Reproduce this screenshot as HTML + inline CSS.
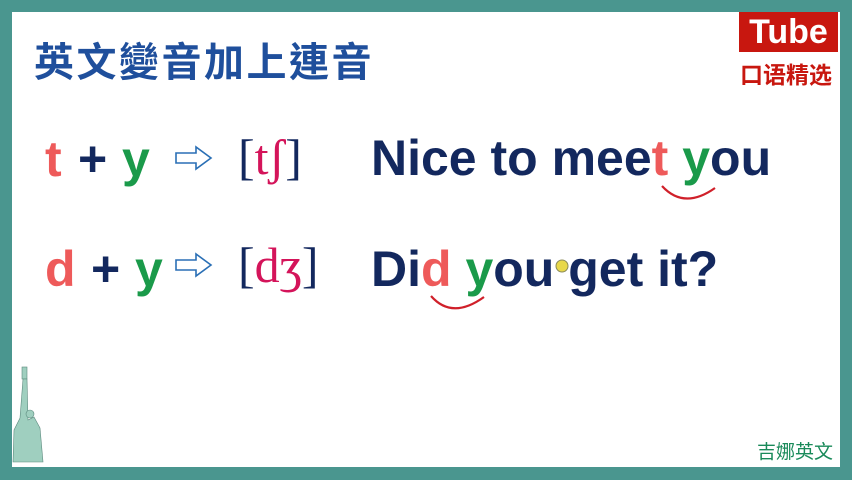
<!DOCTYPE html>
<html><head><meta charset="utf-8"><style>
html,body{margin:0;padding:0}
body{width:852px;height:480px;background:#4a968f;position:relative;overflow:hidden;font-family:"Liberation Sans","Noto Sans CJK TC",sans-serif}
#panel{position:absolute;left:12px;top:12px;width:828px;height:455px;background:#fff}
.a{position:absolute;white-space:nowrap}
.title{left:34px;top:30px;font-size:40px;font-weight:bold;color:#1f4f9c;font-family:"Liberation Sans","Noto Sans CJK TC",sans-serif;letter-spacing:2.5px}
.tube{left:739px;top:12px;width:99px;height:40px;background:#c8170f;color:#fff;font-weight:bold;font-size:34px;line-height:40px;text-align:center}
.kou{left:740px;top:56px;font-size:23px;font-weight:bold;color:#c8170f;font-family:"Liberation Sans","Noto Sans CJK SC",sans-serif;letter-spacing:0px}
.big{font-size:50px;color:#13285e;line-height:1;font-weight:bold}
.r{color:#ee5a5a}.g{color:#1a9a4a}.p{color:#d4145a}
.ipa{font-family:"Liberation Serif","DejaVu Serif",serif;font-size:50px;color:#13285e}
.name{left:757px;top:437px;font-size:19px;color:#1a8a5a;font-family:"Liberation Sans","Noto Sans CJK TC",sans-serif}
</style></head><body>
<div id="panel"></div>
<div class="a title">英文變音加上連音</div>
<div class="a tube">Tube</div>
<div class="a kou">口语精选</div>

<div class="a big" style="left:45px;top:134px"><span class="r">t</span></div>
<div class="a big" style="left:78px;top:134px">+</div>
<div class="a big g" style="left:122px;top:134px">y</div>
<svg class="a" style="left:174px;top:145px" width="40" height="26"><path d="M2 8 H22 V2 L37 13 L22 24 V18 H2 Z" fill="none" stroke="#2a6fb5" stroke-width="1.6"/></svg>
<div class="a ipa" style="left:238px;top:128px">[<span class="p">tʃ</span>]</div>

<div class="a big" style="left:45px;top:244px"><span class="r">d</span></div>
<div class="a big" style="left:91px;top:244px">+</div>
<div class="a big g" style="left:135px;top:244px">y</div>
<svg class="a" style="left:174px;top:252px" width="40" height="26"><path d="M2 8 H22 V2 L37 13 L22 24 V18 H2 Z" fill="none" stroke="#2a6fb5" stroke-width="1.6"/></svg>
<div class="a ipa" style="left:238px;top:236px">[<span class="p">dʒ</span>]</div>

<div class="a big" style="left:371px;top:133px">Nice to mee<span class="r">t</span> <span class="g">y</span>ou</div>
<div class="a big" style="left:371px;top:244px">Di<span class="r">d</span> <span class="g">y</span>ou get it?</div>
<svg class="a" style="left:0;top:0" width="852" height="480"><path d="M662 186 Q684 210 715 188" fill="none" stroke="#d0202a" stroke-width="2.2"/><path d="M431 296 Q452 320 484 297" fill="none" stroke="#d0202a" stroke-width="2.2"/>
<circle cx="562" cy="266" r="6" fill="#e8d84a" stroke="#8a8a5a"/>
<g fill="#9fcfbf" stroke="#5c8a7e" stroke-width="0.6"><rect x="22" y="367" width="5" height="12"/><path d="M23 379 L27 379 L28 420 L34 417 L40 428 L43 462 L13 462 L14 430 L20 418 Z"/><circle cx="30" cy="414" r="4"/></g></svg>
<div class="a name">吉娜英文</div>
</body></html>
